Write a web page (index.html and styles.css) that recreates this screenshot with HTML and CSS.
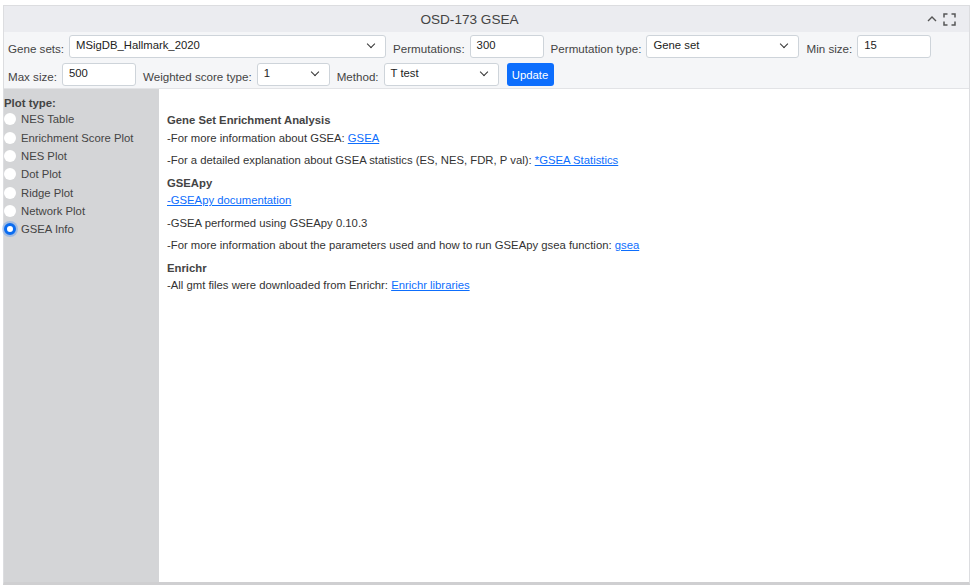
FILE: index.html
```html
<!DOCTYPE html>
<html>
<head>
<meta charset="utf-8">
<link rel="stylesheet" href="styles.css">
</head>
<body>
<div class="card">
  <div class="card-header">
    <div class="title">OSD-173 GSEA</div>
    <div class="tools">
      <svg class="ico" width="12" height="12" viewBox="0 0 12 12"><path d="M2 8 L6 4 L10 8" fill="none" stroke="#555" stroke-width="1.4"/></svg>
      <svg class="ico" width="13" height="13" viewBox="0 0 13 13"><path d="M1 4.5V1H4.5M8.5 1H12V4.5M12 8.5V12H8.5M4.5 12H1V8.5" fill="none" stroke="#555" stroke-width="1.5"/></svg>
    </div>
  </div>
  <div class="controls">
    <div class="row">
      <label class="lbl">Gene sets:</label>
      <div class="field sel w317">MSigDB_Hallmark_2020<span class="chev"></span></div>
      <label class="lbl">Permutations:</label>
      <div class="field w74">300</div>
      <label class="lbl">Permutation type:</label>
      <div class="field sel w153">Gene set<span class="chev"></span></div>
      <label class="lbl">Min size:</label>
      <div class="field w74">15</div>
    </div>
    <div class="row">
      <label class="lbl">Max size:</label>
      <div class="field w74">500</div>
      <label class="lbl">Weighted score type:</label>
      <div class="field sel w73">1<span class="chev"></span></div>
      <label class="lbl">Method:</label>
      <div class="field sel w115">T test<span class="chev"></span></div>
      <button class="btn">Update</button>
    </div>
  </div>
  <div class="body">
    <aside class="sidebar">
      <div class="side-title">Plot type:</div>
      <div class="radio"><span class="dot"></span>NES Table</div>
      <div class="radio"><span class="dot"></span>Enrichment Score Plot</div>
      <div class="radio"><span class="dot"></span>NES Plot</div>
      <div class="radio"><span class="dot"></span>Dot Plot</div>
      <div class="radio"><span class="dot"></span>Ridge Plot</div>
      <div class="radio"><span class="dot"></span>Network Plot</div>
      <div class="radio"><span class="dot on"></span>GSEA Info</div>
    </aside>
    <main class="main">
      <div class="h">Gene Set Enrichment Analysis</div>
      <p>-For more information about GSEA: <a href="#">GSEA</a></p>
      <p>-For a detailed explanation about GSEA statistics (ES, NES, FDR, P val): <a href="#">*GSEA Statistics</a></p>
      <div class="h">GSEApy</div>
      <p><a href="#">-GSEApy documentation</a></p>
      <p>-GSEA performed using GSEApy 0.10.3</p>
      <p>-For more information about the parameters used and how to run GSEApy gsea function: <a href="#">gsea</a></p>
      <div class="h">Enrichr</div>
      <p>-All gmt files were downloaded from Enrichr: <a href="#">Enrichr libraries</a></p>
    </main>
  </div>
</div>
</body>
</html>
```
FILE: styles.css
```css
* { box-sizing: border-box; }
html, body { margin: 0; padding: 0; background: #fff; }
body {
  font-family: "Liberation Sans", Arial, sans-serif;
  font-size: 11.3px;
  color: #333;
}
.card {
  margin: 5px 4px 0 3px;
  height: 580px;
  border: 1px solid #dcdde0;
  border-bottom: 3px solid #cfcfd1;
  display: flex;
  flex-direction: column;
}
.card-header {
  height: 26px;
  background: #ebecf0;
  display: flex;
  align-items: center;
}
.title {
  flex: 1;
  text-align: center;
  padding-left: 9px;
  font-size: 13.6px;
  color: #444;
}
.tools {
  width: 30px;
  margin-right: 13px;
  display: flex;
  gap: 5px;
  align-items: center;
  justify-content: flex-end;
}
.controls {
  background: #f5f6f8;
  padding: 3px 4px 0 4px;
  border-bottom: 1px solid #e2e3e6;
}
.row {
  display: flex;
  align-items: center;
  height: 23px;
  margin-bottom: 5px;
}
.row:last-child { margin-bottom: 2px; }
.lbl {
  color: #444;
  font-size: 11.6px;
  margin-right: 5px;
  line-height: 15px;
  padding-top: 4px;
}
.field {
  height: 23px;
  background: #fff;
  border: 1px solid #ced4da;
  border-radius: 3px;
  padding: 0 6px;
  line-height: 19px;
  font-size: 11.3px;
  color: #222;
  margin-right: 7px;
  position: relative;
}
.w317 { width: 317px; }
.w74 { width: 74px; }
.w153 { width: 153px; }
.w73 { width: 73px; }
.w115 { width: 115px; }
.chev {
  position: absolute;
  right: 11px;
  top: 5px;
  width: 6px;
  height: 6px;
  border-right: 1.3px solid #333;
  border-bottom: 1.3px solid #333;
  transform: rotate(45deg);
}
.btn {
  height: 23px;
  width: 47px;
  margin-left: 1px;
  background: #0d6efd;
  border: none;
  border-radius: 3px;
  color: #fff;
  font-family: inherit;
  font-size: 11.3px;
  padding: 0;
}
.body {
  flex: 1;
  display: flex;
}
.sidebar {
  width: 155px;
  background: #d4d5d7;
  padding: 8px 0 0 0;
}
.side-title {
  font-weight: bold;
  font-size: 11.4px;
  color: #444;
  margin-bottom: 1px;
}
.radio {
  display: flex;
  align-items: center;
  height: 18.35px;
  font-size: 11.3px;
  color: #444;
}
.dot {
  width: 12px;
  height: 12px;
  border-radius: 50%;
  background: #fff;
  margin-left: 0;
  margin-right: 5px;
}
.dot.on {
  border: 3.5px solid #0a6cf0;
  box-shadow: 0 0 0 2px rgba(13, 110, 253, 0.25);
}
.main {
  flex: 1;
  padding: 23px 0 0 8px;
  font-size: 11.3px;
  color: #333;
  line-height: 17.5px;
}
.h { font-weight: bold; color: #444; }
p { margin: 0 0 5px 0; }
a { color: #0d6efd; text-decoration: underline; }
```
